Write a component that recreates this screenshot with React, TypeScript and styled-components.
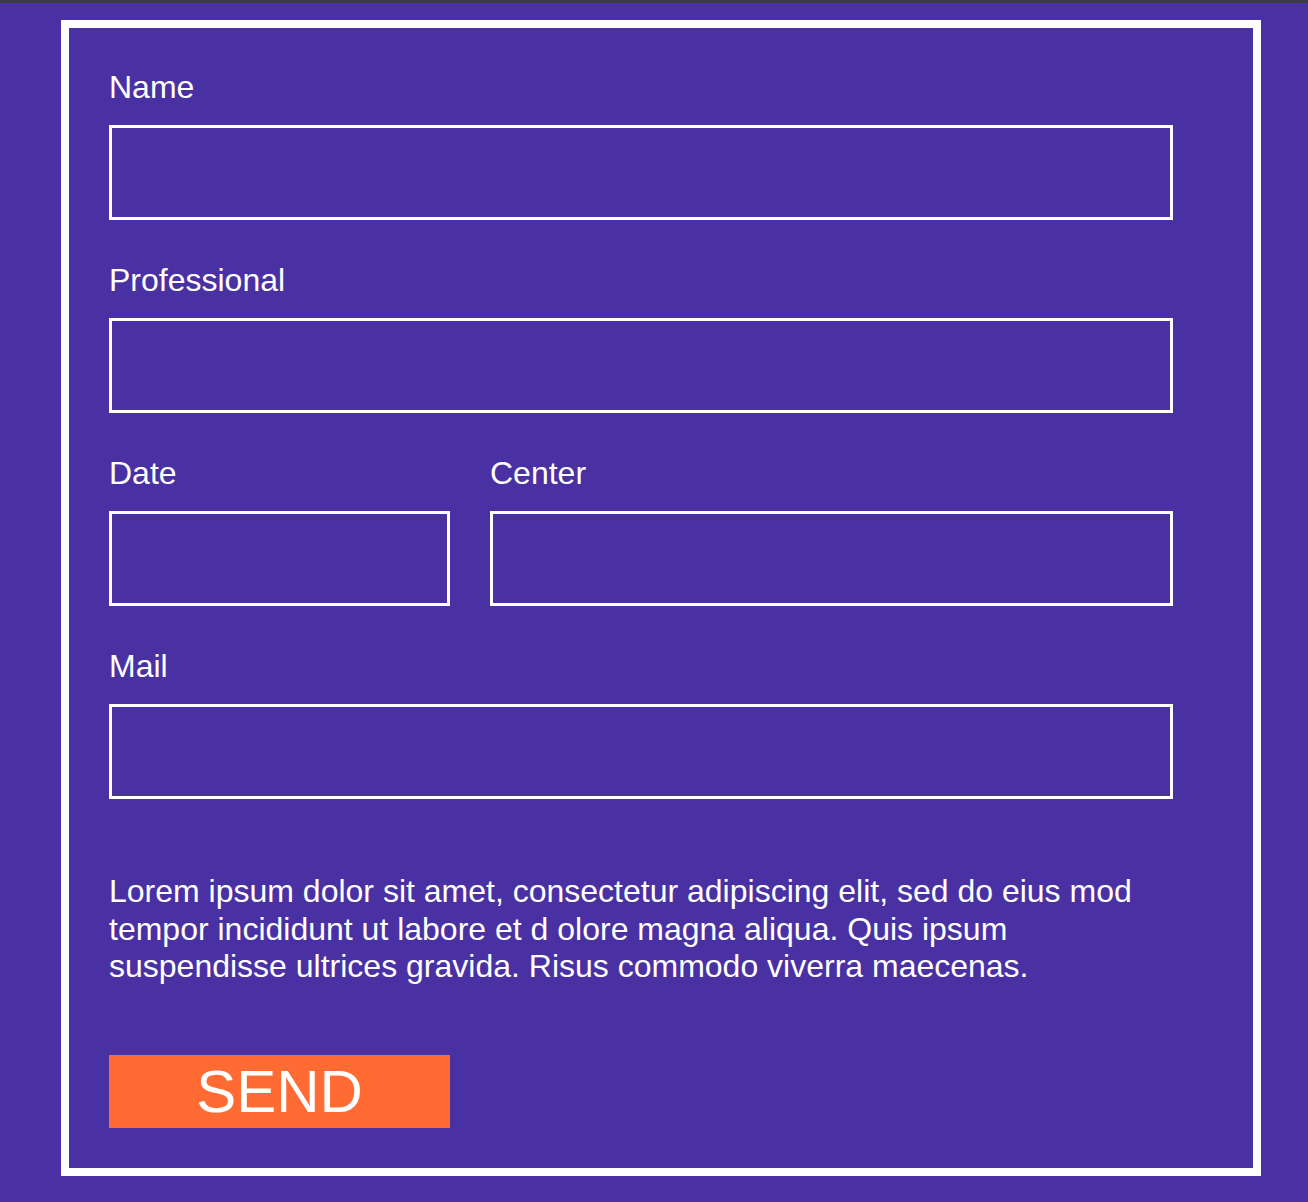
import React from "react";
import styled, { createGlobalStyle } from "styled-components";

const GlobalStyle = createGlobalStyle`
  html, body {
    margin: 0;
    padding: 0;
    background: #4a31a3;
  }
  body {
    font-family: "Liberation Sans", Arial, Helvetica, sans-serif;
    color: #ffffff;
  }
  * { box-sizing: border-box; }
`;

const Page = styled.div`
  min-height: 100vh;
  background: #4a31a3;
  border-top: 3px solid #3d3d3f;
  padding: 17px 47px 26px 61px;
`;

const Frame = styled.form`
  width: 1200px;
  border: 8px solid #ffffff;
  padding: 43px 80px 40px 40px;
  display: flex;
  flex-direction: column;
`;

const Field = styled.div<{ $gapAfter?: number }>`
  display: flex;
  flex-direction: column;
  gap: 22px;
  margin-bottom: ${(p) => (p.$gapAfter ?? 44)}px;
`;

const Row = styled.div`
  display: grid;
  grid-template-columns: 341px 1fr;
  column-gap: 40px;
  margin-bottom: 44px;
`;

const Label = styled.label`
  font-size: 32px;
  line-height: 32px;
  color: #ffffff;
  display: block;
`;

const Input = styled.input`
  display: block;
  width: 100%;
  height: 95px;
  margin: 0;
  padding: 0 16px;
  background: transparent;
  border: 3px solid #ffffff;
  border-radius: 0;
  outline: none;
  color: #ffffff;
  font-family: inherit;
  font-size: 28px;
`;

const Text = styled.p`
  margin: 0 0 69px 0;
  font-size: 32px;
  line-height: 37.5px;
  color: #ffffff;
`;

const SendButton = styled.button`
  width: 341px;
  height: 73px;
  margin: 0;
  padding: 0;
  border: none;
  border-radius: 0;
  background: #ff6b33;
  color: #ffffff;
  font-family: "Liberation Sans", Arial, Helvetica, sans-serif;
  font-size: 60px;
  line-height: 73px;
  cursor: pointer;
`;

export default function App() {
  return (
    <>
      <GlobalStyle />
      <Page>
        <Frame onSubmit={(e) => e.preventDefault()}>
          <Field>
            <Label htmlFor="name">Name</Label>
            <Input id="name" type="text" />
          </Field>
          <Field>
            <Label htmlFor="professional">Professional</Label>
            <Input id="professional" type="text" />
          </Field>
          <Row>
            <Field $gapAfter={0}>
              <Label htmlFor="date">Date</Label>
              <Input id="date" type="text" />
            </Field>
            <Field $gapAfter={0}>
              <Label htmlFor="center">Center</Label>
              <Input id="center" type="text" />
            </Field>
          </Row>
          <Field $gapAfter={74}>
            <Label htmlFor="mail">Mail</Label>
            <Input id="mail" type="text" />
          </Field>
          <Text>
            Lorem ipsum dolor sit amet, consectetur adipiscing elit, sed do eius mod tempor
            incididunt ut labore et d olore magna aliqua. Quis ipsum suspendisse ultrices
            gravida. Risus commodo viverra maecenas.
          </Text>
          <div>
            <SendButton type="submit">SEND</SendButton>
          </div>
        </Frame>
      </Page>
    </>
  );
}
